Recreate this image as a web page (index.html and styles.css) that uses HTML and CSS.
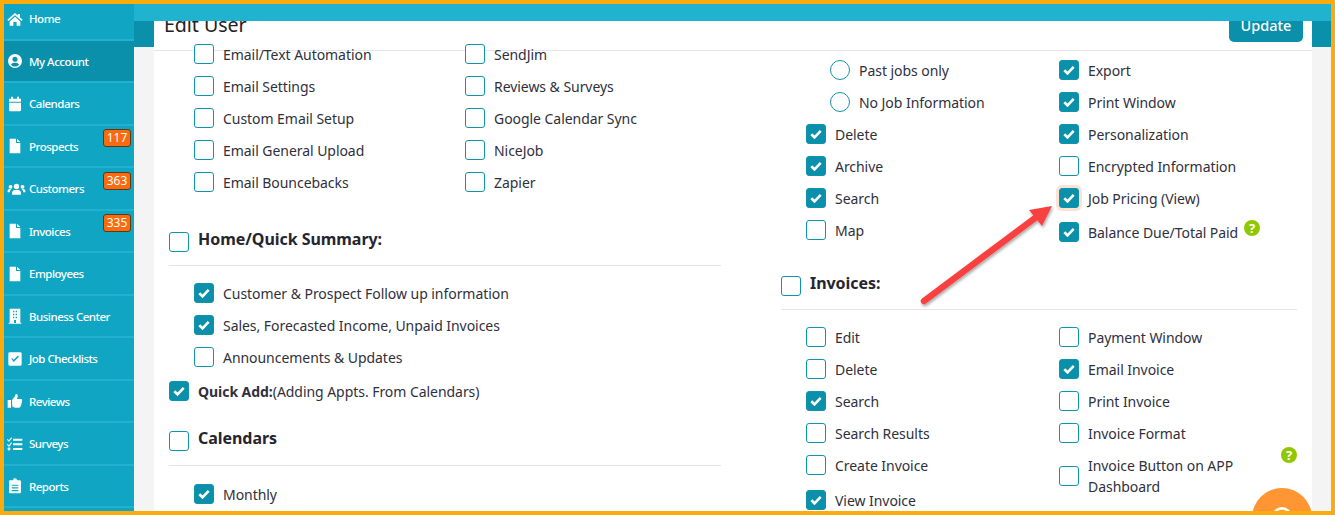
FILE: index.html
```html
<!DOCTYPE html>
<html lang="en">
<head>
    <meta charset="UTF-8">
    <meta name="viewport" content="width=device-width, initial-scale=1.0">
    <title>Edit User</title>
    <link rel="stylesheet" href="styles.css">
</head>
<body>
<div class="frame">
    <nav class="sidebar">
        <a class="nav-item"><svg class="nav-icon" viewBox="0 0 24 24"><path d="M12 3 .5 13.2l1.6 1.8L12 6.4 21.9 15l1.6-1.8-4-3.5V4.5h-3.2v2.4z"/><path d="M4 15.8V22h5.6v-5.6h4.8V22H20v-6.2l-8-7z"/></svg>Home</a>
        <a class="nav-item active"><svg class="nav-icon" viewBox="0 0 24 24"><path fill-rule="evenodd" d="M12 1.5a10.5 10.5 0 1 1 0 21 10.5 10.5 0 0 1 0-21zm0 4a3.8 3.8 0 1 0 0 7.600 3.800 3.800 0 0 0 0-7.600zm0 9.200c-2.800 0-5 1-6 2.800 1.400 1.700 3.600 2.800 6 2.800s4.600-1.100 6-2.800c-1-1.800-3.200-2.800-6-2.800z"/></svg>My Account</a>
        <a class="nav-item"><svg class="nav-icon" viewBox="0 0 24 24"><path d="M6 1h3v3h6V1h3v3h3v4.500H3V4h3zM3 10h18v11a2 2 0 0 1-2 2H5a2 2 0 0 1-2-2z"/></svg>Calendars</a>
        <a class="nav-item"><svg class="nav-icon" viewBox="0 0 24 24"><path d="M4 1h9.500v6.500H20V23H4zM15 1l5 5h-5z"/></svg>Prospects<span class="badge">117</span></a>
        <a class="nav-item"><svg class="nav-icon wide" viewBox="0 0 30 24"><circle cx="15" cy="8" r="4.200"/><circle cx="5.500" cy="8.500" r="3"/><circle cx="24.500" cy="8.500" r="3"/><path d="M8 21v-3.500c0-2.500 2.500-4 4-4h6c1.500 0 4 1.500 4 4V21zM1 17v-2c0-1.500 1-3 3-3h3c-1.500 1-2.500 3-2.500 5zM29 17v-2c0-1.500-1-3-3-3h-3c1.500 1 2.500 3 2.500 5z"/></svg>Customers<span class="badge">363</span></a>
        <a class="nav-item"><svg class="nav-icon" viewBox="0 0 24 24"><path d="M4 1h9.500v6.500H20V23H4zM15 1l5 5h-5z"/></svg>Invoices<span class="badge">335</span></a>
        <a class="nav-item"><svg class="nav-icon" viewBox="0 0 24 24"><path d="M4 1h9.500v6.500H20V23H4zM15 1l5 5h-5z"/></svg>Employees</a>
        <a class="nav-item"><svg class="nav-icon" viewBox="0 0 24 24"><path fill-rule="evenodd" d="M4 1h16v21h1.500v1.500h-19V22H4zm5 3v2.500h2V4zm4 0v2.500h2V4zM9 8.500V11h2V8.500zm4 0V11h2V8.500zM9 13v2.500h2V13zm4 0v2.500h2V13zm-2.500 5v4.500h3V18z"/></svg>Business Center</a>
        <a class="nav-item"><svg class="nav-icon" viewBox="0 0 24 24"><path fill-rule="evenodd" d="M4 2h16a2 2 0 0 1 2 2v16a2 2 0 0 1-2 2H4a2 2 0 0 1-2-2V4a2 2 0 0 1 2-2zm14 6.500-1.600-1.600-6.400 6.300-2.700-2.700L6.700 12l3.300 4.400z"/></svg>Job Checklists</a>
        <a class="nav-item"><svg class="nav-icon" viewBox="0 0 24 24"><path d="M1 10.500h5V22H1zM7.500 10.500 12 5c.5-1 .5-2.500 1-3.500 2.500-.5 3.500 1.500 3 4L15 9h6c2 0 2.500 2.500 1 3.500.8 1.200.5 2.500-.5 3.200.5 1.300 0 2.500-1 3 .3 1.800-.8 3.300-2.500 3.300h-4c-2 0-4-1-6-1.500z"/></svg>Reviews</a>
        <a class="nav-item"><svg class="nav-icon" viewBox="0 0 24 24"><path d="M9 4h14v3H9zM9 11h14v3H9zM9 18h14v3H9z"/><path d="M1 4.500 3 6.500 6.500 2 7.500 3 3 9 0 5.500zM1 12l2 2 3.500-4.500 1 1L3 16.500 0 13z"/><circle cx="3" cy="19.500" r="2.200"/></svg>Surveys</a>
        <a class="nav-item"><svg class="nav-icon" viewBox="0 0 24 24"><path fill-rule="evenodd" d="M9 3.500a3 3 0 0 1 6 0h4a2 2 0 0 1 2 2V21a2 2 0 0 1-2 2H5a2 2 0 0 1-2-2V5.500a2 2 0 0 1 2-2zM7 10v1.800h10V10zm0 4v1.800h10V14zm0 4v1.800h10V18z"/></svg>Reports</a>
    </nav>

    <main class="content">
        <div class="topbar"></div>
        <div class="band">
            <section class="card">
                <header class="card-head">
                    <h1>Edit User</h1>
                    <button class="update-btn">Update</button>
                </header>
                <div class="card-body">
                    <div class="panel panel-left">
                        <div class="opts">
                            <div class="opt-col">
                                <label class="opt"><input type="checkbox">Email/Text Automation</label>
                                <label class="opt"><input type="checkbox">Email Settings</label>
                                <label class="opt"><input type="checkbox">Custom Email Setup</label>
                                <label class="opt"><input type="checkbox">Email General Upload</label>
                                <label class="opt"><input type="checkbox">Email Bouncebacks</label>
                            </div>
                            <div class="opt-col">
                                <label class="opt"><input type="checkbox">SendJim</label>
                                <label class="opt"><input type="checkbox">Reviews &amp; Surveys</label>
                                <label class="opt"><input type="checkbox">Google Calendar Sync</label>
                                <label class="opt"><input type="checkbox">NiceJob</label>
                                <label class="opt"><input type="checkbox">Zapier</label>
                            </div>
                        </div>
                        <label class="section-title home-title"><input type="checkbox">Home/Quick Summary:</label>
                        <hr class="rule home-rule">
                        <div class="opts single">
                            <label class="opt"><input type="checkbox" checked>Customer &amp; Prospect Follow up information</label>
                            <label class="opt"><input type="checkbox" checked>Sales, Forecasted Income, Unpaid Invoices</label>
                            <label class="opt"><input type="checkbox">Announcements &amp; Updates</label>
                        </div>
                        <label class="opt quick-add"><input type="checkbox" checked><b>Quick Add:</b>(Adding Appts. From Calendars)</label>
                        <label class="section-title calendars-title"><input type="checkbox">Calendars</label>
                        <hr class="rule calendars-rule">
                        <div class="opts single">
                            <label class="opt"><input type="checkbox" checked>Monthly</label>
                        </div>
                    </div>

                    <div class="panel panel-right">
                        <div class="opts">
                            <div class="opt-col">
                                <label class="opt radio-opt"><input type="radio" name="jobs">Past jobs only</label>
                                <label class="opt radio-opt"><input type="radio" name="jobs">No Job Information</label>
                                <label class="opt"><input type="checkbox" checked>Delete</label>
                                <label class="opt"><input type="checkbox" checked>Archive</label>
                                <label class="opt"><input type="checkbox" checked>Search</label>
                                <label class="opt"><input type="checkbox">Map</label>
                            </div>
                            <div class="opt-col">
                                <label class="opt"><input type="checkbox" checked>Export</label>
                                <label class="opt"><input type="checkbox" checked>Print Window</label>
                                <label class="opt"><input type="checkbox" checked>Personalization</label>
                                <label class="opt"><input type="checkbox">Encrypted Information</label>
                                <label class="opt"><input class="focused" type="checkbox" checked>Job Pricing (View)</label>
                                <label class="opt balance"><input type="checkbox" checked>Balance Due/Total Paid<span class="help">?</span></label>
                            </div>
                        </div>
                        <label class="section-title invoices-title"><input type="checkbox">Invoices:</label>
                        <hr class="rule invoices-rule">
                        <div class="opts">
                            <div class="opt-col">
                                <label class="opt"><input type="checkbox">Edit</label>
                                <label class="opt"><input type="checkbox">Delete</label>
                                <label class="opt"><input type="checkbox" checked>Search</label>
                                <label class="opt"><input type="checkbox">Search Results</label>
                                <label class="opt"><input type="checkbox">Create Invoice</label>
                                <label class="opt view-invoice"><input type="checkbox" checked>View Invoice</label>
                            </div>
                            <div class="opt-col">
                                <label class="opt"><input type="checkbox">Payment Window</label>
                                <label class="opt"><input type="checkbox" checked>Email Invoice</label>
                                <label class="opt"><input type="checkbox">Print Invoice</label>
                                <label class="opt"><input type="checkbox">Invoice Format</label>
                                <label class="opt two-line"><input type="checkbox"><span class="wrap-text">Invoice Button on APP Dashboard</span><span class="help">?</span></label>
                            </div>
                        </div>
                    </div>
                </div>
            </section>
        </div>
    </main>

    <!-- annotation arrow from the screenshot -->
    <svg class="arrow" viewBox="0 0 145 125">
        <defs>
            <filter id="arrowShadow" x="-10%" y="-10%" width="125%" height="125%">
                <feDropShadow dx="1" dy="2" stdDeviation="1.500" flood-color="#000" flood-opacity=".35"/>
            </filter>
        </defs>
        <g filter="url(#arrowShadow)">
            <path d="M11 111 122 28" stroke="#f9403f" stroke-width="6.500" stroke-linecap="round" fill="none"/>
            <path d="M139 16 129 36 116 20z" fill="#f9403f"/>
        </g>
    </svg>

    <div class="chat-btn">
        <svg viewBox="0 0 30 30" width="26" height="26"><circle cx="15" cy="15" r="10" fill="none" stroke="#fff" stroke-width="3"/></svg>
    </div>
</div>
</body>
</html>
```

FILE: styles.css
```css
* {
    box-sizing: border-box;
}
html, body {
    margin: 0;
    height: 100%;
    overflow: hidden;
}
body {
    font-family: "Noto Sans", Arial, sans-serif;
    font-size: 14px;
    letter-spacing: -0.05px;
    color: #30303c;
}
.frame {
    position: relative;
    display: flex;
    width: 1335px;
    height: 515px;
    border: 4px solid #fbab0c;
    overflow: hidden;
}

/* left nav */
.sidebar {
    flex: 0 0 130px;
    background-color: #10a6c3;
    overflow: hidden;
}
.nav-item {
    position: relative;
    display: flex;
    align-items: center;
    height: 42.5px;
    padding-left: 3px;
    border-bottom: 2px solid #20b2ce;
    color: #fff;
    font-size: 11.500px;
    font-weight: 500;
    letter-spacing: -0.5px;
    white-space: nowrap;
}
.nav-item:first-child {
    margin-top: -5.75px;
}
.nav-item.active {
    background-color: #0a90aa;
}
.nav-icon {
    flex: 0 0 auto;
    width: 16px;
    height: 16px;
    margin-right: 6px;
    fill: #fff;
}
.nav-icon.wide {
    width: 19px;
    margin-right: 3px;
}
.badge {
    position: absolute;
    top: 3.5px;
    right: 3px;
    width: 28px;
    height: 18px;
    border: 1px solid #5a3a1a;
    border-radius: 3px;
    background-color: #f96b0e;
    font-size: 12px;
    font-weight: 400;
    line-height: 16px;
    letter-spacing: 0;
    text-align: center;
}

/* main area */
.content {
    flex: 1;
    display: flex;
    flex-direction: column;
    min-width: 0;
}
.topbar {
    position: relative;
    z-index: 1;
    flex: 0 0 17px;
    background-color: #1fb3d0;
}
.band {
    flex: 1;
    min-height: 0;
    padding: 0 19px 0 20px;
    background: linear-gradient(#0a90aa 26px, #f4f4f4 26px);
}
.card {
    height: 100%;
    background-color: #fff;
    overflow: hidden;
}
.card-head {
    display: flex;
    justify-content: space-between;
    height: 30px;
    padding: 0 9px 0 10px;
    border-bottom: 1px solid #e4e4f2;
    overflow: hidden;
}
.card-head h1 {
    margin: -14px 0 0;
    font-size: 19.600px;
    font-weight: 400;
    line-height: 36px;
    color: #222;
}
.update-btn {
    width: 74px;
    height: 34px;
    margin-top: -13px;
    border: none;
    border-radius: 5px;
    background-color: #0a90aa;
    color: #fff;
    font-family: inherit;
    font-size: 14.500px;
    font-weight: 500;
}
.card-body {
    display: grid;
    grid-template-columns: 552px 516px;
    column-gap: 60px;
    padding-left: 15px;
}
.panel-left {
    margin-top: -13px;
}
.panel-right {
    padding-top: 3px;
}

/* option rows */
.opts {
    display: grid;
    padding-left: 25px;
}
.panel-left .opts {
    grid-template-columns: 271px 1fr;
}
.panel-right .opts {
    grid-template-columns: 253px 1fr;
}
.opts.single {
    display: block;
}
.opt-col {
    display: flex;
    flex-direction: column;
    min-width: 0;
}
.opt {
    display: flex;
    align-items: center;
    height: 32px;
    white-space: nowrap;
}
input[type="checkbox"], input[type="radio"] {
    appearance: none;
    flex: 0 0 20px;
    width: 20px;
    height: 20px;
    margin: 0 9px 0 0;
    border: 1px solid #0f94ae;
    border-radius: 3px;
    background: #fff center / 14px 14px no-repeat;
}
input[type="radio"] {
    border-radius: 50%;
}
input[type="checkbox"]:checked {
    background-color: #0a90aa;
    background-image: url("data:image/svg+xml,%3Csvg xmlns='http://www.w3.org/2000/svg' viewBox='0 0 14 14'%3E%3Cpath d='M2.300 7.200 5.500 10.300 11.700 3.900' fill='none' stroke='%23fff' stroke-width='2.600'/%3E%3C/svg%3E");
}
input.focused {
    box-shadow: 0 0 0 3px #fbe3d3;
}
.radio-opt {
    padding-left: 24px;
}
.balance {
    margin-top: 2px;
}
.view-invoice {
    margin-top: 3px;
}
.two-line {
    height: 54px;
    white-space: normal;
    line-height: 21.500px;
}
.wrap-text {
    width: 160px;
}
.help {
    flex: 0 0 auto;
    align-self: flex-start;
    width: 16px;
    height: 16px;
    border-radius: 50%;
    background-color: #8fc800;
    color: #fff;
    font-size: 13px;
    font-weight: 700;
    line-height: 16px;
    text-align: center;
}
.balance .help {
    margin: 4px 0 0 6px;
}
.two-line .help {
    margin: -2px 0 0 34px;
}

/* section headings */
.section-title {
    display: flex;
    align-items: center;
    height: 32px;
    font-size: 16px;
    font-weight: 700;
    color: #25252f;
}
.section-title input {
    margin-top: 5px;
}
.rule {
    height: 1px;
    margin: 0 0 12px;
    border: none;
    background-color: #e4e4ee;
}
.home-title {
    margin-top: 25px;
}
.home-rule {
    margin: 10px 0 11px;
}
.calendars-title {
    margin-top: 15px;
}
.calendars-rule {
    margin-top: 11px;
}
.invoices-title {
    margin-top: 19px;
}
.invoices-rule {
    margin: 10px 0 11px;
}
.quick-add {
    margin-top: 2px;
}
.quick-add b {
    font-weight: 700;
}

/* things lying over the page */
.arrow {
    position: absolute;
    left: 909px;
    top: 186px;
    width: 145px;
    height: 125px;
}
.chat-btn {
    position: absolute;
    left: 1248px;
    top: 484px;
    display: flex;
    justify-content: center;
    padding-top: 16px;
    width: 60px;
    height: 60px;
    border-radius: 50%;
    background-color: #ff9533;
}
```
